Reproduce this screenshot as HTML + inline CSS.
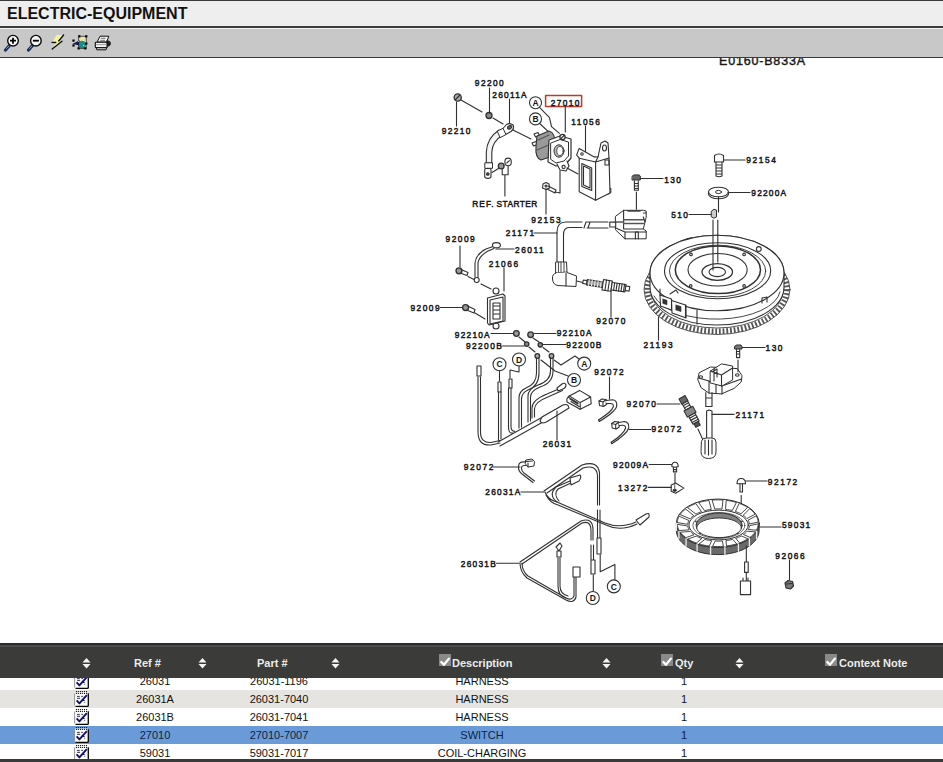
<!DOCTYPE html>
<html><head><meta charset="utf-8">
<style>
*{margin:0;padding:0;box-sizing:border-box}
html,body{width:943px;height:762px;overflow:hidden;background:#fff;font-family:"Liberation Sans",sans-serif}
.abs{position:absolute}
#title{left:0;top:0;width:943px;height:28px;background:#eeeeee;border-top:1px solid #3a3a3a;border-bottom:2px solid #3d3d3d}
#title span{position:absolute;left:7px;top:4px;font:bold 16px "Liberation Sans",sans-serif;color:#111}
#tool{left:0;top:28px;width:943px;height:30px;background:#c8c8c8;border-top:1px solid #f2f2f2;border-bottom:1px solid #3a3a3a}
#thead{left:0;top:643px;width:943px;height:35px;background:#3b3c3a;border-top:2px solid #2a2a2a}
.ht{position:absolute;top:12px;font:bold 11px "Liberation Sans",sans-serif;color:#ececec;white-space:nowrap}
.sort{position:absolute;top:12.5px}
.cb{position:absolute;top:9px;width:12px;height:12px;background:#8a8a8a}
.row{position:absolute;left:0;width:943px;height:18px}
.cell{position:absolute;top:3px;font:11px "Liberation Sans",sans-serif;color:#111;white-space:nowrap;text-align:center;width:120px}
.note{position:absolute;left:74px;top:1px}
#diag{position:absolute;left:0;top:0}
.lb{font-family:"Liberation Sans",sans-serif;font-weight:bold;font-size:9px;letter-spacing:1px;fill:#1a1a1a}
</style></head><body>
<svg id="diag" width="943" height="762" viewBox="0 0 943 762" style="position:absolute;left:0;top:0">
<g fill="none" stroke="#303030" stroke-width="1.1" stroke-linecap="round" stroke-linejoin="round">
<!-- ===== FLYWHEEL ===== -->
<!-- gear ring teeth -->
<ellipse cx="717" cy="289.5" rx="69.8" ry="41.8" stroke="#555" stroke-width="5.5" stroke-dasharray="1.8 1.9" stroke-linecap="butt"/>
<ellipse cx="717" cy="289.5" rx="73" ry="45" stroke="#2b2b2b" stroke-width="0.8"/>
<ellipse cx="717" cy="289.5" rx="66.5" ry="38.5" stroke="#2b2b2b" stroke-width="0.8"/>
<!-- body -->
<path d="M650 273 V287 A67 38 0 0 0 784 287 V273 A67 37.7 0 0 0 650 273 Z" fill="#fff"/>
<ellipse cx="717" cy="273" rx="67" ry="37.7" fill="#fff"/>
<ellipse cx="717.6" cy="270.7" rx="53.1" ry="28"/>
<ellipse cx="717.6" cy="271" rx="48.1" ry="25.8" stroke-width="0.9"/>
<ellipse cx="717.9" cy="269.75" rx="42.6" ry="23.85" stroke-width="1.5"/>
<ellipse cx="717.6" cy="269.75" rx="29.6" ry="16.25"/>
<ellipse cx="717.25" cy="272" rx="15.25" ry="8.3" stroke-width="1.3"/>
<ellipse cx="717.25" cy="272" rx="8.25" ry="4.6"/>
<path d="M654 296 A64 30 0 0 0 780 292" stroke-width="0.9"/>
<circle cx="691" cy="254.4" r="1.3"/><circle cx="744.1" cy="254.4" r="1.3"/>
<circle cx="690.7" cy="285.9" r="1.3"/><circle cx="744.1" cy="285.9" r="1.3"/>
<circle cx="758.8" cy="249" r="2.4"/>
<!-- magnets -->
<path d="M660 295 L671.5 299 L671.5 310 L660.5 306 Z M671.5 300.5 L685.5 305 L685.5 317.8 L672 313 Z" fill="#fff" stroke-width="1.1"/>
<path d="M663 299 l4 1.3 v4.5 l-4 -1.3z M676 305 l5 1.6 v5 l-5 -1.6z" fill="#333" stroke-width="0.6"/>
<path d="M686 305 V318 M660 295 V289 M670 294 l6 -4 l2 3"/>
<path d="M697 310 V324 M762 303 l0 -5 l5 -1 l0 5"/>
<!-- key lines -->
<path d="M658.5 317 V340"/>
<path d="M713 220 V270 M717.8 220 V262"/>
<!-- ===== 510 key ===== -->
<path d="M711.5 211 Q714 208 716.5 210 L716.5 217 Q714 219.5 711.5 217 Z" fill="#ccc" stroke-width="1"/>
<path d="M689 214.5 H711"/>
<!-- ===== 92154 bolt ===== -->
<path d="M714.5 155.5 Q719 152.5 723.5 155.5 V162 H714.5 Z" fill="#fff" stroke-width="1.1"/>
<path d="M716 162 v14 q3 1.5 6 0 v-14 M716 165h6 M716 168h6 M716 171h6 M716 174h6"/>
<path d="M724 160 H745"/>
<!-- 92200A washer -->
<path d="M708.5 192 V194 A10 4.8 0 0 0 728.5 194 V192" fill="#fff" stroke-width="1.1"/>
<ellipse cx="718.5" cy="192" rx="10" ry="4.8" fill="#fff" stroke-width="1.1"/>
<ellipse cx="718.5" cy="192" rx="3" ry="1.6" stroke-width="1"/>
<path d="M728 192.5 H750 M718.5 197 V212"/>
<!-- ===== 130 bolt top / coil ===== -->
<path d="M632.4 176 L634 174.9 L639 174.9 L640.3 176 L640.3 180 L632.4 180 Z" fill="#666" stroke-width="1"/>
<path d="M634.4 180.8 V190.2 H638.3 V180.8 M634.4 183.5h3.9 M634.4 186h3.9 M634.4 188.5h3.9"/>
<path d="M640.5 178.5 H663"/>
<path d="M636.4 192.1 V209.3"/>
<path d="M615.7 216.2 L623.6 210.3 L643.3 210.3 L646.2 211 L646.2 217.2 L643.3 229 L646.2 231 L646.2 238.8 L625 238.8 L615.7 230 Z" fill="#fff" stroke-width="1"/>
<path d="M623.6 210.3 V229 H643.3 M615.7 228 L625 232 L646.2 232 M625 232 V238.8"/>
<path d="M623.6 219.7 H643.3 M623.6 223.6 H643.3 M615.7 222 H623.6" stroke-width="1.5" stroke="#555"/>
<path d="M628 210.8 L640 210.8" stroke-width="1.8" stroke="#444"/>
<path d="M635.4 238.8 V232.5 Q636.8 231 638.3 232.5 V238.8"/>
<path d="M643.3 213 L646 213 M643.3 217 L645 222"/>
<path d="M609.8 222.1 H615.7 V227 H609.8 Z" fill="#fff"/>
<path d="M604.4 189 L607 187.2 L610.8 188.5 L610.8 192.5 L608 194.1 L604.4 193 Z" fill="#fff" stroke-width="1.1"/>
<circle cx="607.6" cy="190.6" r="1"/>
<!-- HT lead 21171 top -->
<path d="M608 222 H587 M608 228 H587 M586 222 l-2 6 M590 222 l-2 6"/>
<path d="M582 222 H566 Q557 222 557 232 V266 M582 227.5 H569 Q563.5 227.5 563.5 235 V266"/>
<path d="M534 233 H557"/>
<!-- plug cap -->
<path d="M556 262 L566.5 262 L567 272 L556 273 Z" fill="#fff" stroke-width="1"/>
<path d="M558.5 262 V272 M561 262 V272.5 M564 262 V272" stroke="#555"/>
<path d="M556 273 Q552 274 552.5 279 Q553 285 558 285.5 L576 286.5 L576.5 276 L567 272.5" fill="#fff" stroke-width="1"/>
<path d="M566 273.5 L566 286" />
<path d="M576.5 281 L583 282.5"/>
<!-- spark plug top -->
<g transform="rotate(8.7 583 281.6)">
<path d="M583 280 h4 v3.5 h-4z" fill="#fff"/>
<path d="M587 279 h16 v5.5 h-16z" fill="#999"/>
<path d="M589 279 v5.5 M592 279 v5.5 M595 279 v5.5 M598 279 v5.5 M601 279 v5.5" stroke="#fff" stroke-width="0.8"/>
<path d="M603 276.5 h9 v10.5 h-9z" fill="#fff" stroke-width="1.1"/>
<path d="M606 276.5 v10.5 M609 276.5 v10.5"/>
<path d="M612 278 h14 v7.5 h-14z" fill="#fff"/>
<path d="M614.5 278 v7.5 M617 278 v7.5 M619.5 278 v7.5 M622 278 v7.5 M624.5 278 v7.5"/>
<path d="M626 279.5 h4 v4.5 h-4z" fill="#fff"/>
</g>
<path d="M611 291 V317"/>
<!-- ===== starter switch cluster ===== -->
<circle cx="457.7" cy="97.5" r="3.6" fill="#aaa" stroke-width="1.3"/>
<path d="M455.5 99.5 l4 -4"/>
<path d="M456.5 102 V126 M461 100 L482 112"/>
<ellipse cx="489" cy="115.5" rx="3" ry="3" fill="#888" stroke-width="1.3"/>
<path d="M489.5 113 V88 M493 118 L503 124"/>
<ellipse cx="509.6" cy="127.3" rx="4" ry="3" fill="#fff"/><ellipse cx="509.6" cy="127.3" rx="1.5" ry="1"/>
<path d="M509.5 99 V123 M513 130 L531 139"/>
<!-- cable 26011A -->
<path d="M502 129.5 L506.5 124.5 Q510 122.5 513 125 Q514.5 129 511 131.5 L505.5 134.5 Z" fill="#fff" stroke-width="1.1"/>
<ellipse cx="509.6" cy="127.3" rx="2.2" ry="1.6" transform="rotate(-30 509.6 127.3)" fill="#666"/>
<path d="M499 130 Q487 138 486.3 152 V163 L491.8 163 V152 Q492.5 141 503 135 Z" fill="#f4f4f4" stroke-width="1.1"/>
<path d="M497.6 131 L503 128.3 L506 134.5 L500.5 137.5 Z" fill="#fff" stroke-width="1"/>
<path d="M485.2 162.8 H492.5 V168.3 H485.2 Z" fill="#fff" stroke-width="1"/>
<path d="M484.7 170 Q484.7 168.5 486.5 168.5 H489.5 Q491 168.5 491 170 V176.5 Q491 178.4 487.8 178.4 Q484.7 178.4 484.7 176.5 Z" fill="#fff" stroke-width="1.1"/>
<circle cx="487.8" cy="174" r="1.3" fill="#555"/>
<path d="M492 172.5 L498.5 168.5"/>
<circle cx="501.2" cy="166" r="2.9" fill="#999" stroke-width="1.3"/>
<ellipse cx="508.1" cy="161.9" rx="3.2" ry="3.8" fill="#fff" stroke-width="1.1"/>
<path d="M506.8 163 l2.6 -2.4"/>
<path d="M502.2 169.5 V174.7 H508.1 V166 M504.9 174.7 V196"/>
<!-- A B circles -->
<circle cx="535.5" cy="102.7" r="6" fill="#fff"/>
<circle cx="535.5" cy="118.9" r="6" fill="#fff"/>
<path d="M539.5 107.3 L549.5 117.6 L551.5 126.7 L559.4 133.3 M539.7 123.5 L550.2 133.3"/>
<!-- red box -->
<rect x="545.6" y="95.5" width="36" height="11" stroke="#c0392b" stroke-width="1.5"/>
<path d="M565.3 107 V132"/>
<!-- solenoid + bracket -->
<path d="M534 134 l4 -1.5 l1.5 3 l-4 1.5z M532 143 l4 -1.5 l1.5 3 l-4 1.5z" fill="#fff" stroke-width="1.1"/>
<path d="M537 136 L549 131 Q556 133 555 146 L553 156 L541 160 Q535 158 536 146 Z" fill="#9a9a9a" stroke-width="1.1"/>
<path d="M538 140 L549 135 M537 150 L551 144" stroke="#555"/>
<path d="M549 140 L560 136 L571 139 L571 158 L566 164 L556 166 L548 162 Z" fill="#fff" stroke-width="1.2"/>
<path d="M551 143 L560 139.5 L568.5 142 L568.5 156 L564 161 L556 163 L551 159.5 Z" stroke-width="1"/>
<ellipse cx="559" cy="151" rx="5" ry="6.2" fill="#bbb" stroke-width="1"/>
<ellipse cx="560" cy="151" rx="3.2" ry="4.5" fill="#fff" stroke-width="0.8"/>
<path d="M557 164 L560 170 L566 171 L569 166 L567 161" fill="#fff"/>
<circle cx="563.6" cy="167" r="1.6"/>
<circle cx="562.5" cy="137" r="2.6" fill="#fff" stroke-width="1.3"/>
<path d="M561 138.5 l3 -3"/>
<path d="M567 168 L578 174 M560 171 V193 L555 192"/>
<!-- bracket 11056 -->
<path d="M585.5 126 V153"/>
<path d="M576.6 154.9 L579.2 148.4 L594.3 156.9 L598 157 L601 143 L605 141 L608 143 L609 158 L610 193 L595.6 200.2 L579.2 191.7 L579.2 158.2 Z" fill="#fff"/>
<path d="M579.2 158.2 L595.6 162 L598 157 M595.6 162 V200.2 M595.6 162 L609 158"/>
<path d="M581.8 163.5 L591.7 168 L591.7 190.4 L581.8 186.4 Z M583.5 166 L590 169 L590 188 L583.5 185 Z"/>
<ellipse cx="604.5" cy="148" rx="2" ry="3"/>
<circle cx="582" cy="154" r="1.2"/>
<path d="M605 160 h4 v5 h-4z"/>
<!-- 92153 bolt -->
<path d="M543 184 L546 182.5 L549 184 L549.5 188 L546 189.5 L542.5 188 Z" fill="#fff" stroke-width="1.1"/><circle cx="546" cy="186" r="1"/>
<path d="M548 186 L556 190 L555 193 L547 189"/>
<path d="M546 189 V214"/>
<!-- ===== rectifier 21066 ===== -->
<circle cx="459" cy="270.8" r="3" fill="#999" stroke-width="1.3"/>
<path d="M461 269.5 L468 272.5 L467 275.5 L460 273"/>
<path d="M460 246 V267 M468 276.5 L474 279.5"/>
<circle cx="476.7" cy="280" r="2.5" fill="#fff"/>
<path d="M475 277 V263 Q476 254 486 249 L493 246.5 M478 277 V263 Q479 256 488 251 L494 248.5"/>
<ellipse cx="496.4" cy="245.2" rx="4" ry="2.6" fill="#fff"/>
<path d="M496 249 H514"/>
<path d="M481 284 L491 289"/>
<circle cx="496" cy="291" r="3" fill="#fff"/><circle cx="496" cy="326" r="3" fill="#fff"/>
<path d="M487.5 298 L503 294 L505 296 V321 L489 325 L487.5 323 Z" fill="#fff"/>
<path d="M490 300 L503 297 V321 L490 324 Z M493 303 h7 v16 h-7z M494 306h5 M494 310h5 M494 314h5"/>
<path d="M504 268 V291"/>
<circle cx="465.6" cy="307.6" r="3" fill="#999" stroke-width="1.3"/>
<path d="M467.5 306 L475 309.5 L474 313 L466.5 310"/>
<path d="M440.5 307.5 H462 M475 313 L485 319"/>
<!-- ===== harness 26031 ===== -->
<circle cx="516.4" cy="333.5" r="2.8" fill="#999" stroke-width="1.3"/>
<circle cx="530.6" cy="334.7" r="2.8" fill="#999" stroke-width="1.3"/>
<circle cx="526.7" cy="344.1" r="2.2" fill="#888" stroke-width="1.3"/>
<circle cx="540.3" cy="344.8" r="2.2" fill="#888" stroke-width="1.3"/>
<path d="M491 333.5 H513.5 M534 333.5 H556 M502 346 H524 M543 344.5 H566"/>
<path d="M519 337 L525 342 M529 347 L535 352 M533 338 L539 342 M543 347.5 L549 352"/>
<circle cx="537.3" cy="356" r="2.3" fill="#aaa" stroke-width="1.3"/>
<circle cx="551.5" cy="356" r="2.3" fill="#aaa" stroke-width="1.3"/>
<path d="M541 360 L555 371 L568 376 M554 360 L561 365 L575 356 L579 359"/>
<circle cx="499.5" cy="364.3" r="6.5" fill="#fff"/>
<circle cx="519" cy="359.5" r="6.5" fill="#fff"/>
<circle cx="584.2" cy="363.6" r="6.5" fill="#fff"/>
<circle cx="574" cy="380" r="6.5" fill="#fff"/>
<path d="M499.5 371 V381 M519 366 V372 L510 370 L510 378"/>
<!-- wires -->
<path d="M477 366 h4 v10 h-4z" fill="#fff"/>
<path d="M478 377 V432 Q478 446 491 445 L500 443 M480.5 377 V432 Q480.5 443 491 442.5 L500 440.5"/>
<path d="M498 382 h3 v10 h-3z" fill="#fff"/>
<path d="M498.5 392 V440 M501 392 V439"/>
<path d="M509 379 h3 v9 h-3z" fill="#fff"/>
<path d="M508.5 388 V427 Q508.5 434 513 433 M511 388 V427 Q511 431 515 431.5"/>
<path d="M536.5 358 V373 Q536.5 384 526 388 Q519 391 519 398 V428 M539 358 V373 Q539 386 528 390 Q521.5 393 521.5 399 V427"/>
<path d="M550.5 358 V371 Q550.5 381 538 385 Q528 389 528 396 V422 M553 358 V371 Q553 383 540 387 Q530.5 391 530.5 397 V421"/>
<path d="M561 388 L547 394 Q532 400 532 408 V418 M562.5 390.5 L549 396.5 Q534.5 402 534.5 409 V417"/>
<path d="M557 388 l5 -4 q3 -2 4 1 q0 3 -3 4 l-5 2z" fill="#fff"/>
<path d="M498 442 L564 405 M500 446 L566 409"/>
<path d="M542 417 L563 405 Q568 403 569 408 L548 421 Q542 425 540 421 Z" fill="#fff"/>
<path d="M566.8 399 L569.3 395.9 L579.6 390.4 L590.6 397 L591.2 403.8 L580.2 409.3 L567 402 Z" fill="#fff"/>
<path d="M569.3 395.9 L580.2 402.6 L590.6 397 M580.2 402.6 V409.3 M570 399 l8 5 M571 401.5 l8 5 M568 397 l10 6"/>
<path d="M557 411 V440"/>
<!-- ===== 92072 clips ===== -->
<path d="M609.5 377 V399"/>
<path d="M599 401 L602 399 L606 399.5 L606.5 404.5 L603.5 406.5 L599.5 405.5 Z" fill="#fff" stroke-width="1.1"/>
<path d="M599 401 L603 402 L606 399.5 M603 402 V406.3"/>
<path d="M606.1 400.5 L612.8 399.8 Q617.5 400.5 616.6 406.5 Q615 412 599.2 421.5 L598.5 420 Q612 411.5 613.4 406.5 Q613.6 403.3 610 403.5 L606.3 403.6" fill="#fff" stroke-width="1.1"/>
<path d="M611.7 423.5 L614.7 421.5 L618.7 422 L619.2 427 L616.2 429 L612.2 428 Z" fill="#fff" stroke-width="1.1"/>
<path d="M611.7 423.5 L615.7 424.5 L618.7 422 M615.7 424.5 V428.8"/>
<path d="M619.1 422.5 L624.6 421.5 Q629.5 422.5 628.7 428 Q627 434 611.7 443.8 L611.1 442.3 Q624 434 625.6 428 Q625.8 425 622 425.3 L619.2 425.5" fill="#fff" stroke-width="1.1"/>
<path d="M629 429.5 H651"/>
<!-- spark plug lower -->
<g transform="rotate(61 683 399)">
<path d="M681 395.5 h6 v7 h-6z" fill="#666" stroke-width="1"/>
<path d="M687 396 h7 v6 h-7z" fill="#fff"/>
<path d="M689 396 v6 M691.5 396 v6"/>
<path d="M694 394 h7 v10 h-7z" fill="#888" stroke-width="1"/>
<path d="M701 395.5 h9 v7 h-9z" fill="#fff"/>
<path d="M703 395.5 v7 M705.5 395.5 v7 M708 395.5 v7" stroke-width="1.2"/>
<path d="M710 396.5 h4 v5 h-4z" fill="#555"/>
</g>
<path d="M657 404 H680 M698 429 L703 440"/>
<!-- coil lower -->
<path d="M699.5 372.6 L710.5 367 L737.3 368.6 L742 375.7 L741.2 382 L734.1 388.4 L721.5 393.9 L708.9 393.1 L701 387.6 L697.9 379.7 Z" fill="#fff" stroke-width="1"/>
<path d="M698.5 378 L709 381 L722 386 L741.5 379 M709 381 V393 M722 386 V393.9 M716 384 V393.5"/>
<ellipse cx="700.8" cy="377" rx="1.8" ry="1.2"/><ellipse cx="737.3" cy="375" rx="1.8" ry="1.2"/>
<path d="M710.5 371 L721.5 363.9 L732.6 366 L732.6 380 L722 386 L710.5 383 Z" fill="#fff" stroke-width="1"/>
<path d="M710.5 371 L721.5 375 L732.6 368 M721.5 375 V386 M714 369 L714 381 M712 372 l5 -3 v8" />
<path d="M734.9 346 L736.5 345 L741 345 L742 346.5 L742 349 L734.9 349 Z" fill="#777" stroke-width="1"/>
<path d="M736.5 349 V357.6 H739.7 V349 M736.5 351.5h3.2 M736.5 354h3.2"/>
<path d="M738 360 V371.8"/>
<path d="M742.5 347.5 H765"/>
<path d="M705.8 392.5 V406.5 H712 V392.5 M705.8 398 H712"/>
<!-- ht lead lower -->
<path d="M706.6 411 L709 410 L712 411 V438 M706.6 411 V438"/>
<path d="M701.5 441 Q702 438 706 438 H712 Q716 438 716 442 V452 Q716 458.5 708.5 458.5 Q701 458.5 701 452 Z" fill="#fff" stroke-width="1"/>
<path d="M705 440 V454 M708.5 440 V455 M712 440 V454"/>
<path d="M712 414.4 H734"/>
<!-- ===== 92009A / 13272 ===== -->
<path d="M649.2 464.5 H671.8"/>
<path d="M671.8 466.5 Q671.8 462.3 675 462.3 Q678.2 462.3 678.2 466.5 Q675 468 671.8 466.5 Z" fill="#fff" stroke-width="1.1"/>
<path d="M673.4 467.3 V471.9 H676.6 V467.3 M673.4 469.6 H676.6"/>
<path d="M675 473.4 V483"/>
<path d="M671.2 484.9 L675.6 483 L683.9 488.1 L675.6 493.2 L671.2 491.3 Z" fill="#fff" stroke-width="1.1"/>
<ellipse cx="674.7" cy="490.3" rx="1.6" ry="1" fill="#333"/>
<path d="M674.7 484.5 V489" stroke="#666"/>
<path d="M648.3 487.4 H671.2"/>
<!-- ===== harness 26031A ===== -->
<path d="M521 492 H544"/>
<path d="M493.5 467 H520"/>
<path d="M526 460 L532 459 L534.5 461.5 L534 466 L528 467 L525.5 464 Z" fill="#fff" stroke-width="1"/>
<path d="M526 461.5 L532.5 461 M528 467 V463"/>
<path d="M525.5 462 Q519 461 518.5 466 Q518 471 522 474 L533 482.5 M526 465.5 Q521.5 465 521.5 468 Q521.5 471 524 473 L534.5 481"/>
<path d="M544 491 L582 465 Q598 460 599.5 473 V505 M547 493 L583 468 Q596 464 597.5 475 V505"/>
<path d="M597.5 510 V538 M600 510 V538 M597 538 h4 v16 h-4z"/>
<path d="M545 492 Q548 500 557 502 L605 523 Q620 529 636 522 M546 495 Q550 503 558 505 L606 525 Q620 532 637 524"/>
<path d="M636 520 L646 514 Q650 512 649 517 L640 525 Z" fill="#fff"/>
<path d="M557 502 Q548 495 556 487 L570 481 M559 501 Q553 494 558 489 L571 483"/>
<path d="M570 478 L580 475 Q582 477 579 481 L571 485 Z" fill="#fff"/>
<!-- ===== harness 26031B ===== -->
<path d="M496.5 563.3 H519"/>
<path d="M520 562 L581 521 Q593 517 593 530 V540 M522 564 L582 523 Q591 520 591 531 V540"/>
<path d="M591 545 V560 M593.5 545 V560 M591 560 h4 v14 h-4z"/>
<path d="M520 563 Q520 572 527 578 L566 600 Q574 604 576 597 V577 M522 563 Q522 571 528 576 L566 598 Q572 601 574 596 V577"/>
<path d="M573 567 h7 v10 h-7z" fill="#fff"/>
<path d="M566 598 Q558 596 558 586 V558 M568 596 Q560 594 560 586 V558"/>
<path d="M556 547 l4 -4 l2 3 l-3 5z M557 551 h4 v6 h-4z" fill="#fff"/>
<path d="M593.3 575 V591"/>
<circle cx="592.8" cy="598" r="6.5" fill="#fff"/>
<path d="M600.2 555 V571.7 L614.9 564.4 V580"/>
<circle cx="613.8" cy="586.4" r="6.5" fill="#fff"/>
<!-- ===== stator 59031 ===== -->
<path d="M741.2 495.6 V503"/>
<path d="M737 483.7 Q737 478.5 741.2 478.5 Q745.5 478.5 745.5 483.7 Z" fill="#fff" stroke-width="1.1"/>
<path d="M740 483.7 V492 H742.5 V483.7"/>
<path d="M745.5 481 H767"/>
<path d="M759.10 523.20 L759.04 524.46 L758.87 525.72 L758.59 526.98 L758.20 528.22 L757.69 529.45 L757.08 530.66 L756.35 531.85 L755.53 533.02 L754.59 534.16 L753.56 535.28 L752.43 536.35 L751.20 537.40 L749.88 538.40 L748.48 539.36 L746.99 540.28 L745.42 541.15 L743.77 541.97 L742.05 542.74 L740.27 543.45 L738.42 544.11 L736.52 544.72 L734.57 545.26 L732.57 545.75 L730.53 546.17 L728.45 546.53 L726.35 546.82 L724.22 547.05 L722.07 547.22 L719.91 547.32 L717.75 547.35 L715.59 547.32 L713.43 547.22 L711.28 547.05 L709.15 546.82 L707.05 546.53 L704.97 546.17 L702.93 545.75 L700.93 545.26 L698.98 544.72 L697.08 544.11 L695.23 543.45 L693.45 542.74 L691.73 541.97 L690.08 541.15 L688.51 540.28 L687.02 539.36 L685.62 538.40 L684.30 537.40 L683.07 536.35 L681.94 535.28 L680.91 534.16 L679.97 533.02 L679.15 531.85 L678.42 530.66 L677.81 529.45 L677.30 528.22 L676.91 526.98 L676.63 525.72 L676.46 524.46 L676.40 523.20 L676.40 530.40 L676.46 531.66 L676.63 532.92 L676.91 534.18 L677.30 535.42 L677.81 536.65 L678.42 537.86 L679.15 539.05 L679.97 540.22 L680.91 541.36 L681.94 542.48 L683.07 543.55 L684.30 544.60 L685.62 545.60 L687.02 546.56 L688.51 547.48 L690.08 548.35 L691.73 549.17 L693.45 549.94 L695.23 550.65 L697.08 551.31 L698.98 551.92 L700.93 552.46 L702.93 552.95 L704.97 553.37 L707.05 553.73 L709.15 554.02 L711.28 554.25 L713.43 554.42 L715.59 554.52 L717.75 554.55 L719.91 554.52 L722.07 554.42 L724.22 554.25 L726.35 554.02 L728.45 553.73 L730.53 553.37 L732.57 552.95 L734.57 552.46 L736.52 551.92 L738.42 551.31 L740.27 550.65 L742.05 549.94 L743.77 549.17 L745.42 548.35 L746.99 547.48 L748.48 546.56 L749.88 545.60 L751.20 544.60 L752.43 543.55 L753.56 542.48 L754.59 541.36 L755.53 540.22 L756.35 539.05 L757.08 537.86 L757.69 536.65 L758.20 535.42 L758.59 534.18 L758.87 532.92 L759.04 531.66 L759.10 530.40 Z" fill="#6a6a6a" stroke="#2b2b2b" stroke-width="1"/>
<ellipse cx="717.75" cy="523.2" rx="41.35" ry="24.15" fill="#fff" stroke="#2b2b2b" stroke-width="1"/>
<path d="M758.26 524.25 L758.06 525.76 L757.68 527.25 L757.14 528.73 L756.44 530.19 L748.26 529.51 L748.69 528.66 L749.03 527.80 L749.28 526.92 L749.43 526.05 Z" fill="#fff" stroke="#333" stroke-width="0.9"/>
<path d="M756.61 531.46 V538.66" stroke="#eee" stroke-width="1.3"/>
<path d="M755.19 532.17 L754.11 533.54 L752.87 534.88 L751.48 536.16 L749.95 537.39 L743.51 534.53 L744.47 533.80 L745.36 533.05 L746.17 532.27 L746.89 531.48 Z" fill="#fff" stroke="#333" stroke-width="0.9"/>
<path d="M749.43 538.72 V545.92" stroke="#eee" stroke-width="1.3"/>
<path d="M747.61 539.00 L745.77 540.08 L743.82 541.09 L741.75 542.02 L739.58 542.88 L735.76 538.39 L737.14 537.88 L738.46 537.33 L739.73 536.75 L740.93 536.13 Z" fill="#fff" stroke="#333" stroke-width="0.9"/>
<path d="M738.42 544.11 V551.31" stroke="#eee" stroke-width="1.3"/>
<path d="M736.42 543.93 L734.06 544.58 L731.62 545.14 L729.12 545.61 L726.58 545.99 L725.93 540.64 L727.56 540.41 L729.17 540.13 L730.74 539.80 L732.28 539.44 Z" fill="#fff" stroke="#333" stroke-width="0.9"/>
<path d="M724.93 546.98 V554.18" stroke="#eee" stroke-width="1.3"/>
<path d="M722.99 546.35 L720.37 546.50 L717.75 546.55 L715.13 546.50 L712.51 546.35 L715.22 541.00 L716.91 541.08 L718.60 541.10 L720.29 541.08 L721.98 541.00 Z" fill="#fff" stroke="#333" stroke-width="0.9"/>
<path d="M710.57 546.98 V554.18" stroke="#eee" stroke-width="1.3"/>
<path d="M708.92 545.99 L706.38 545.61 L703.88 545.14 L701.44 544.58 L699.08 543.93 L704.92 539.44 L706.46 539.80 L708.03 540.13 L709.64 540.41 L711.27 540.64 Z" fill="#fff" stroke="#333" stroke-width="0.9"/>
<path d="M697.08 544.11 V551.31" stroke="#eee" stroke-width="1.3"/>
<path d="M695.92 542.88 L693.75 542.02 L691.68 541.09 L689.73 540.08 L687.89 539.00 L696.27 536.13 L697.47 536.75 L698.74 537.33 L700.06 537.88 L701.44 538.39 Z" fill="#fff" stroke="#333" stroke-width="0.9"/>
<path d="M686.07 538.72 V545.92" stroke="#eee" stroke-width="1.3"/>
<path d="M685.55 537.39 L684.02 536.16 L682.63 534.88 L681.39 533.54 L680.31 532.17 L690.31 531.48 L691.03 532.27 L691.84 533.05 L692.73 533.80 L693.69 534.53 Z" fill="#fff" stroke="#333" stroke-width="0.9"/>
<path d="M678.89 531.46 V538.66" stroke="#eee" stroke-width="1.3"/>
<path d="M679.06 530.19 L678.36 528.73 L677.82 527.25 L677.44 525.76 L677.24 524.25 L687.77 526.05 L687.92 526.92 L688.17 527.80 L688.51 528.66 L688.94 529.51 Z" fill="#fff" stroke="#333" stroke-width="0.9"/>
<path d="M676.40 523.20 V530.40" stroke="#eee" stroke-width="1.3"/>
<path d="M677.24 522.15 L677.44 520.64 L677.82 519.15 L678.36 517.67 L679.06 516.21 L688.94 520.49 L688.51 521.34 L688.17 522.20 L687.92 523.08 L687.77 523.95 Z" fill="#fff" stroke="#333" stroke-width="0.9"/>
<path d="M680.31 514.23 L681.39 512.86 L682.63 511.53 L684.02 510.24 L685.55 509.01 L693.69 515.47 L692.73 516.20 L691.84 516.95 L691.03 517.73 L690.31 518.52 Z" fill="#fff" stroke="#333" stroke-width="0.9"/>
<path d="M687.89 507.40 L689.73 506.32 L691.68 505.31 L693.75 504.38 L695.92 503.52 L701.44 511.61 L700.06 512.12 L698.74 512.67 L697.47 513.25 L696.27 513.87 Z" fill="#fff" stroke="#333" stroke-width="0.9"/>
<path d="M699.08 502.47 L701.44 501.82 L703.88 501.26 L706.38 500.79 L708.92 500.41 L711.27 509.36 L709.64 509.59 L708.03 509.87 L706.46 510.20 L704.92 510.56 Z" fill="#fff" stroke="#333" stroke-width="0.9"/>
<path d="M712.51 500.05 L715.13 499.90 L717.75 499.85 L720.37 499.90 L722.99 500.05 L721.98 509.00 L720.29 508.92 L718.60 508.90 L716.91 508.92 L715.22 509.00 Z" fill="#fff" stroke="#333" stroke-width="0.9"/>
<path d="M726.58 500.41 L729.12 500.79 L731.62 501.26 L734.06 501.82 L736.42 502.47 L732.28 510.56 L730.74 510.20 L729.17 509.87 L727.56 509.59 L725.93 509.36 Z" fill="#fff" stroke="#333" stroke-width="0.9"/>
<path d="M739.58 503.52 L741.75 504.38 L743.82 505.31 L745.77 506.32 L747.61 507.40 L740.93 513.87 L739.73 513.25 L738.46 512.67 L737.14 512.12 L735.76 511.61 Z" fill="#fff" stroke="#333" stroke-width="0.9"/>
<path d="M749.95 509.01 L751.48 510.24 L752.87 511.53 L754.11 512.86 L755.19 514.23 L746.89 518.52 L746.17 517.73 L745.36 516.95 L744.47 516.20 L743.51 515.47 Z" fill="#fff" stroke="#333" stroke-width="0.9"/>
<path d="M756.44 516.21 L757.14 517.67 L757.68 519.15 L758.06 520.64 L758.26 522.15 L749.43 523.95 L749.28 523.08 L749.03 522.20 L748.69 521.34 L748.26 520.49 Z" fill="#fff" stroke="#333" stroke-width="0.9"/>
<ellipse cx="718.6" cy="525" rx="29.7" ry="14.9" fill="#fff" stroke="#2b2b2b" stroke-width="1"/>
<ellipse cx="718.9" cy="525.5" rx="26" ry="13" stroke="#444" stroke-width="0.8"/>
<ellipse cx="719.1" cy="525.3" rx="23" ry="12.3" fill="#808080" stroke="#2b2b2b" stroke-width="1"/>
<ellipse cx="719.1" cy="527.8" rx="22.3" ry="9.8" fill="#fff" stroke="#2b2b2b" stroke-width="0.9"/>
<circle cx="695.88" cy="521.33" r="0.9" fill="#333" stroke="none"/>
<circle cx="741.92" cy="521.33" r="0.9" fill="#333" stroke="none"/>
<circle cx="700.13" cy="533.34" r="0.9" fill="#333" stroke="none"/>
<circle cx="737.67" cy="533.34" r="0.9" fill="#333" stroke="none"/>
<path d="M759 527 H781"/>
<path d="M746.3 546 V562 M744.6 562 h3.6 v10.4 h-3.6z M740.4 581 h10.2 v13.6 h-10.2z M746.3 572.4 V581 M743 581 v-3 M748 581 v-3" fill="#fff"/>
<!-- nut 92066 -->
<path d="M789.5 560 V580"/>
<path d="M785 583 L788 580.5 L792.5 581.5 L793.5 586 L790.5 589 L786 588 Z" fill="#777" stroke-width="1.2"/><path d="M786.5 584 L792 583.5"/>
</g>

<g transform="scale(0.85 1)" style="font-family:'Liberation Sans',sans-serif;font-weight:normal;font-size:9.8px;fill:#161616;stroke:#161616;stroke-width:0.5">
<text x="558.65" y="86.25" textLength="33.94" lengthAdjust="spacing">92200</text>
<text x="579.24" y="97.65" textLength="40.35" lengthAdjust="spacing">26011A</text>
<text x="647.82" y="106.25" textLength="33.94" lengthAdjust="spacing">27010</text>
<text x="672.00" y="124.75" textLength="33.82" lengthAdjust="spacing">11056</text>
<text x="519.82" y="133.65" textLength="33.47" lengthAdjust="spacing">92210</text>
<text x="877.82" y="162.65" textLength="35.00" lengthAdjust="spacing">92154</text>
<text x="781.41" y="182.95" textLength="19.53" lengthAdjust="spacing">130</text>
<text x="883.94" y="195.95" textLength="40.82" lengthAdjust="spacing">92200A</text>
<text x="555.65" y="206.55" textLength="24.94" lengthAdjust="spacing">REF.</text>
<text x="584.06" y="206.55" textLength="48.06" lengthAdjust="spacing">STARTER</text>
<text x="789.76" y="217.65" textLength="19.53" lengthAdjust="spacing">510</text>
<text x="625.00" y="222.65" textLength="34.47" lengthAdjust="spacing">92153</text>
<text x="595.00" y="236.25" textLength="33.29" lengthAdjust="spacing">21171</text>
<text x="524.18" y="242.15" textLength="34.35" lengthAdjust="spacing">92009</text>
<text x="605.94" y="252.75" textLength="33.53" lengthAdjust="spacing">26011</text>
<text x="575.00" y="266.65" textLength="34.59" lengthAdjust="spacing">21066</text>
<text x="482.88" y="311.15" textLength="34.35" lengthAdjust="spacing">92009</text>
<text x="701.47" y="324.35" textLength="34.18" lengthAdjust="spacing">92070</text>
<text x="535.12" y="338.25" textLength="40.94" lengthAdjust="spacing">92210A</text>
<text x="655.00" y="336.25" textLength="40.82" lengthAdjust="spacing">92210A</text>
<text x="548.18" y="349.35" textLength="42.12" lengthAdjust="spacing">92200B</text>
<text x="666.29" y="347.75" textLength="41.18" lengthAdjust="spacing">92200B</text>
<text x="757.12" y="347.75" textLength="34.12" lengthAdjust="spacing">21193</text>
<text x="900.71" y="350.75" textLength="19.88" lengthAdjust="spacing">130</text>
<text x="699.24" y="374.95" textLength="34.59" lengthAdjust="spacing">92072</text>
<text x="737.12" y="407.45" textLength="34.65" lengthAdjust="spacing">92070</text>
<text x="865.35" y="418.45" textLength="33.53" lengthAdjust="spacing">21171</text>
<text x="766.53" y="432.45" textLength="35.18" lengthAdjust="spacing">92072</text>
<text x="638.41" y="447.25" textLength="33.53" lengthAdjust="spacing">26031</text>
<text x="721.24" y="468.25" textLength="41.18" lengthAdjust="spacing">92009A</text>
<text x="545.59" y="470.15" textLength="34.94" lengthAdjust="spacing">92072</text>
<text x="903.24" y="484.85" textLength="34.71" lengthAdjust="spacing">92172</text>
<text x="727.06" y="490.85" textLength="34.65" lengthAdjust="spacing">13272</text>
<text x="570.88" y="495.05" textLength="41.18" lengthAdjust="spacing">26031A</text>
<text x="919.88" y="527.85" textLength="33.35" lengthAdjust="spacing">59031</text>
<text x="912.18" y="558.95" textLength="34.47" lengthAdjust="spacing">92066</text>
<text x="542.06" y="566.55" textLength="41.29" lengthAdjust="spacing">26031B</text>
</g>
<g style="font-family:'Liberation Sans',sans-serif;font-weight:bold;font-size:8.5px;fill:#161616" text-anchor="middle">
<text x="535.5" y="105.8">A</text>
<text x="535.5" y="122.0">B</text>
<text x="499.5" y="367.4">C</text>
<text x="519.0" y="362.6">D</text>
<text x="584.2" y="366.7">A</text>
<text x="574.0" y="383.1">B</text>
<text x="613.8" y="589.5">C</text>
<text x="592.8" y="601.1">D</text>
</g>
<text x="719" y="65" textLength="86" lengthAdjust="spacing" style="font-family:'Liberation Sans',sans-serif;font-weight:normal;font-size:12.5px;fill:#161616;stroke:#161616;stroke-width:0.4">E0160-B833A</text>
</svg><div id="title" class="abs"><span>ELECTRIC-EQUIPMENT</span></div>
<div id="tool" class="abs"></div>
<svg class="abs" style="left:0;top:28px" width="120" height="30" viewBox="0 28 120 30">
 <!-- zoom in -->
 <g>
  <line x1="5.5" y1="50" x2="9.5" y2="45.5" stroke="#1a2f5e" stroke-width="3.2" stroke-linecap="round"/>
  <line x1="6.5" y1="48.5" x2="9" y2="46" stroke="#8aaad4" stroke-width="0.9" stroke-linecap="round"/>
  <circle cx="13" cy="40.7" r="5.3" fill="#fafafa" stroke="#0a0a0a" stroke-width="1.4"/>
  <path d="M10 40.7h6M13 37.7v6" stroke="#000" stroke-width="1.8"/>
 </g>
 <g>
  <line x1="28.5" y1="50" x2="32.5" y2="45.5" stroke="#1a2f5e" stroke-width="3.2" stroke-linecap="round"/>
  <line x1="29.5" y1="48.5" x2="32" y2="46" stroke="#8aaad4" stroke-width="0.9" stroke-linecap="round"/>
  <circle cx="35.9" cy="40.7" r="5.3" fill="#f4f4f4" stroke="#0a0a0a" stroke-width="1.4"/>
  <path d="M32.9 40.7h6" stroke="#000" stroke-width="1.8"/>
 </g>
 <!-- lightning -->
 <path d="M56.5 35 L63.6 35 L58.7 41 L62 41.2 L52.2 49.1 L55.5 42.6 L52 42.4 Z" fill="#f2f29a"/>
 <path d="M63.6 35 L58.7 41 M62 41.2 L52.2 49.1 M52 42.4 L55.8 42.5" stroke="#0a0a0a" stroke-width="1.3" stroke-linecap="round"/>
 <!-- selection -->
 <g>
  <path d="M72.3 44 L79.7 40.2 L79.7 45.5 Z" fill="#161a5a"/>
  <ellipse cx="82.5" cy="39" rx="3.2" ry="2.4" fill="#e8e6a0"/>
  <ellipse cx="82.1" cy="44.6" rx="3.6" ry="3.9" fill="#1e8c86"/>
  <path d="M79 36.3 H86.3 V48.4 H78.6 V36.3" fill="none" stroke="#000" stroke-width="0.6"/>
  <g fill="#000">
   <rect x="72.4" y="39.5" width="2.2" height="2.2"/><rect x="72.4" y="44.4" width="2.2" height="2.2"/>
   <rect x="78.2" y="35.2" width="2.2" height="2.2"/><rect x="85.2" y="35.2" width="2.2" height="2.2"/>
   <rect x="85.2" y="42.4" width="2.2" height="2.2"/><rect x="77.5" y="47.3" width="2.2" height="2.2"/><rect x="84.2" y="47.3" width="2.2" height="2.2"/>
  </g>
  <g fill="#fff"><circle cx="78.6" cy="41.2" r="0.5"/><circle cx="83.5" cy="40.3" r="0.5"/><circle cx="85.3" cy="41.2" r="0.5"/><circle cx="83.5" cy="45.4" r="0.5"/></g>
 </g>
 <!-- printer -->
 <g>
  <path d="M100 36.2 L108.8 36.2 L106.7 42 L97.2 42 Z" fill="#fafafa" stroke="#111" stroke-width="1"/>
  <path d="M100.8 38.3h4.8M100.2 40.3h4.8" stroke="#333" stroke-width="0.7"/>
  <path d="M106.5 40 Q111 40.5 110.9 43.5 Q110.8 46.5 107 46.7 Z" fill="#222"/>
  <path d="M95.3 43 Q95.3 42.3 96 42.3 H107 V47.5 H96 Q95.3 47.5 95.3 46.8 Z" fill="#f2f2f2" stroke="#0a0a0a" stroke-width="1.1"/>
  <path d="M96 44.6 H106.5" stroke="#777" stroke-width="0.7"/>
  <path d="M96.2 47.8 H106.7 L106 49.8 H96.8 Z" fill="#eee" stroke="#0a0a0a" stroke-width="1"/>
 </g>
</svg>
<div class="row" style="top:672px;background:#ffffff">
 <svg class="note" width="15" height="16" viewBox="0 0 15 16"><use href="#notei"/></svg>
 <div class="cell" style="left:95px">26031</div><div class="cell" style="left:219px">26031-1196</div><div class="cell" style="left:422px">HARNESS</div><div class="cell" style="left:624px">1</div>
</div>
<div class="row" style="top:690px;background:#e6e4e0">
 <svg class="note" width="15" height="16" viewBox="0 0 15 16"><use href="#notei"/></svg>
 <div class="cell" style="left:95px">26031A</div><div class="cell" style="left:219px">26031-7040</div><div class="cell" style="left:422px">HARNESS</div><div class="cell" style="left:624px">1</div>
</div>
<div class="row" style="top:708px;background:#ffffff">
 <svg class="note" width="15" height="16" viewBox="0 0 15 16"><use href="#notei"/></svg>
 <div class="cell" style="left:95px">26031B</div><div class="cell" style="left:219px">26031-7041</div><div class="cell" style="left:422px">HARNESS</div><div class="cell" style="left:624px">1</div>
</div>
<div class="row" style="top:726px;background:#6a9bd8">
 <svg class="note" width="15" height="16" viewBox="0 0 15 16"><use href="#notei"/></svg>
 <div class="cell" style="left:95px;color:#0d1f45">27010</div><div class="cell" style="left:219px;color:#0d1f45">27010-7007</div><div class="cell" style="left:422px;color:#0d1f45">SWITCH</div><div class="cell" style="left:624px;color:#0d1f45">1</div>
</div>
<div class="row" style="top:744px;background:#ffffff">
 <svg class="note" width="15" height="16" viewBox="0 0 15 16"><use href="#notei"/></svg>
 <div class="cell" style="left:95px">59031</div><div class="cell" style="left:219px">59031-7017</div><div class="cell" style="left:422px">COIL-CHARGING</div><div class="cell" style="left:624px">1</div>
</div>
<div class="abs" style="left:0;top:759px;width:943px;height:3px;background:#3a3a3a"></div>
<div id="thead" class="abs">
 <div class="abs" style="left:0;top:0;width:943px;height:2px;background:#4b4c4a"></div>
 <svg class="sort" style="left:82px" width="9" height="11" viewBox="0 0 9 11"><use href="#sorti"/></svg>
 <div class="ht" style="left:134px">Ref #</div>
 <svg class="sort" style="left:198px" width="9" height="11" viewBox="0 0 9 11"><use href="#sorti"/></svg>
 <div class="ht" style="left:257px">Part #</div>
 <svg class="sort" style="left:331px" width="9" height="11" viewBox="0 0 9 11"><use href="#sorti"/></svg>
 <div class="cb" style="left:439px"><svg width="12" height="12" viewBox="0 0 12 12"><use href="#chk"/></svg></div>
 <div class="ht" style="left:452px">Description</div>
 <svg class="sort" style="left:602px" width="9" height="11" viewBox="0 0 9 11"><use href="#sorti"/></svg>
 <div class="cb" style="left:661px"><svg width="12" height="12" viewBox="0 0 12 12"><use href="#chk"/></svg></div>
 <div class="ht" style="left:675px">Qty</div>
 <svg class="sort" style="left:735px" width="9" height="11" viewBox="0 0 9 11"><use href="#sorti"/></svg>
 <div class="cb" style="left:825px"><svg width="12" height="12" viewBox="0 0 12 12"><use href="#chk"/></svg></div>
 <div class="ht" style="left:839px">Context Note</div>
</div>
<svg width="0" height="0" style="position:absolute">
 <defs>
  <g id="sorti"><path d="M4.5 0 L8.5 4.5 H0.5 Z M0.5 6 H8.5 L4.5 10.5 Z" fill="#f4f4f4"/></g>
  <g id="chk"><path d="M2.3 6 L4.9 8.8 L9.9 2.6" fill="none" stroke="#fff" stroke-width="2.3" stroke-linecap="round" stroke-linejoin="round"/></g>
  <g id="notei">
   <rect x="0.6" y="1.5" width="13.6" height="13.6" rx="1" fill="#fbfbfb"/>
   <path d="M0.6 2.5 V14.5" stroke="#8a8a8a" stroke-width="0.9"/>
   <path d="M14.3 2.2 V14.6 Q14.3 15.4 13.5 15.4 H1.5" fill="none" stroke="#050505" stroke-width="1.3"/>
   <g fill="#1a1a1a"><rect x="1.9" y="0" width="1.1" height="1.1"/><rect x="3.8" y="0" width="1.1" height="1.1"/><rect x="5.9" y="0" width="1.1" height="1.1"/><rect x="7.8" y="0" width="1.1" height="1.1"/><rect x="9.9" y="0" width="1.1" height="1.1"/><rect x="12" y="0" width="1.1" height="1.1"/>
   <rect x="1.9" y="1.9" width="1.1" height="1.1"/><rect x="3.8" y="1.9" width="1.1" height="1.1"/><rect x="5.9" y="1.9" width="1.1" height="1.1"/><rect x="7.8" y="1.9" width="1.1" height="1.1"/><rect x="9.9" y="1.9" width="1.1" height="1.1"/><rect x="12" y="1.9" width="1.1" height="1.1"/></g>
   <path d="M3.1 5.4h2.6M7.3 5.4h1.6M3.1 7.3h3" stroke="#101040" stroke-width="0.9"/>
   <path d="M2.6 9.4 L5.4 12.4 L12.8 4.2" fill="none" stroke="#10106a" stroke-width="1.9" stroke-linejoin="round"/>
   <path d="M7.3 9.4h3.4" stroke="#10106a" stroke-width="1"/>
   <rect x="10.2" y="10.8" width="1" height="1" fill="#555"/>
  </g>
 </defs>
</svg>
</body></html>
